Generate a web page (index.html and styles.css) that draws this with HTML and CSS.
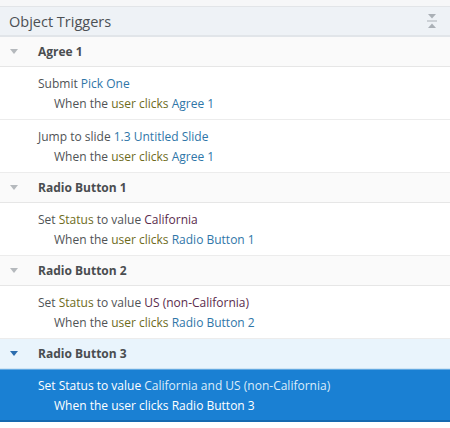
FILE: index.html
```html
<!DOCTYPE html>
<html>
<head>
<meta charset="utf-8">
<link rel="stylesheet" href="styles.css">
</head>
<body>
<div class="panel">
  <div class="topstrip"></div>
  <div class="titlebar">
    <span class="title">Object Triggers</span>
    <svg class="collapse" width="12" height="16" viewBox="0 0 12 16">
      <path d="M2 1 H10 L6 5.5 Z" fill="#aab0b6"/>
      <rect x="1" y="7.5" width="10" height="1" fill="#aab0b6"/>
      <path d="M2 15 H10 L6 10.5 Z" fill="#aab0b6"/>
    </svg>
  </div>

  <div class="group">
    <svg class="caret" width="8" height="5" viewBox="0 0 8 5"><path d="M0 0 H8 L4 5 Z"/></svg>
    <span class="gname">Agree 1</span>
  </div>
  <div class="item">
    <div class="line1">Submit <span class="obj">Pick One</span></div>
    <div class="line2">When the <span class="evt">user clicks</span> <span class="obj">Agree 1</span></div>
  </div>
  <div class="item">
    <div class="line1">Jump to slide <span class="obj">1.3 Untitled Slide</span></div>
    <div class="line2">When the <span class="evt">user clicks</span> <span class="obj">Agree 1</span></div>
  </div>

  <div class="group">
    <svg class="caret" width="8" height="5" viewBox="0 0 8 5"><path d="M0 0 H8 L4 5 Z"/></svg>
    <span class="gname">Radio Button 1</span>
  </div>
  <div class="item">
    <div class="line1">Set <span class="evt">Status</span> to value <span class="val">California</span></div>
    <div class="line2">When the <span class="evt">user clicks</span> <span class="obj">Radio Button 1</span></div>
  </div>

  <div class="group">
    <svg class="caret" width="8" height="5" viewBox="0 0 8 5"><path d="M0 0 H8 L4 5 Z"/></svg>
    <span class="gname">Radio Button 2</span>
  </div>
  <div class="item">
    <div class="line1">Set <span class="evt">Status</span> to value <span class="val">US (non-California)</span></div>
    <div class="line2">When the <span class="evt">user clicks</span> <span class="obj">Radio Button 2</span></div>
  </div>

  <div class="group active">
    <svg class="caret" width="8" height="5" viewBox="0 0 8 5"><path d="M0 0 H8 L4 5 Z"/></svg>
    <span class="gname">Radio Button 3</span>
  </div>
  <div class="item selected">
    <div class="line1">Set <span class="evt">Status</span> to value <span class="val">California and US (non-California)</span></div>
    <div class="line2">When the <span class="evt">user clicks</span> <span class="obj">Radio Button 3</span></div>
  </div>
</div>
</body>
</html>
```

FILE: styles.css
```css
* { box-sizing: border-box; }
html, body {
  margin: 0;
  padding: 0;
  background: #ffffff;
}
body {
  font-family: "Open Sans", "Noto Sans", sans-serif;
  font-size: 12px;
  color: #505356;
}
.panel {
  width: 450px;
  display: flex;
  flex-direction: column;
}
.topstrip {
  height: 7px;
  background: #f6f7f8;
  border-bottom: 1px solid #e2e5e8;
}
.titlebar {
  height: 30px;
  background: #eef2f6;
  border-bottom: 2px solid #e1e5e9;
  display: flex;
  align-items: center;
  justify-content: space-between;
  padding: 0 12px 0 9px;
}
.title {
  font-size: 14.5px;
  color: #4c5054;
}
.collapse { display: block; }
.group {
  height: 30px;
  background: #fafafa;
  border-bottom: 1px solid #e6e6e6;
  display: flex;
  align-items: center;
  padding-left: 10px;
}
.caret {
  fill: #b5b9bd;
  margin-right: 20px;
}
.gname {
  font-weight: bold;
  font-size: 12px;
  color: #4a4d50;
}
.item {
  padding: 7px 0 5px 38px;
  border-bottom: 1px solid #ececec;
  line-height: 20px;
}
.line2 { padding-left: 16px; }
.obj { color: #2f76a8; }
.evt { color: #6e6b1c; }
.val { color: #5a2b4c; }
.group.active {
  background: #e9f4fc;
  border-bottom: 1px solid #cfe4f4;
}
.group.active .caret { fill: #2a6cae; }
.item.selected {
  padding: 6px 0 4px 38px;
  background: #1a80d3;
  color: #ffffff;
  border-top: 1px solid #62a9e2;
  border-bottom: 2px solid #1569b0;
}
.item.selected .obj,
.item.selected .evt { color: #ffffff; }
.item.selected .val { color: #dcecfa; }
```
